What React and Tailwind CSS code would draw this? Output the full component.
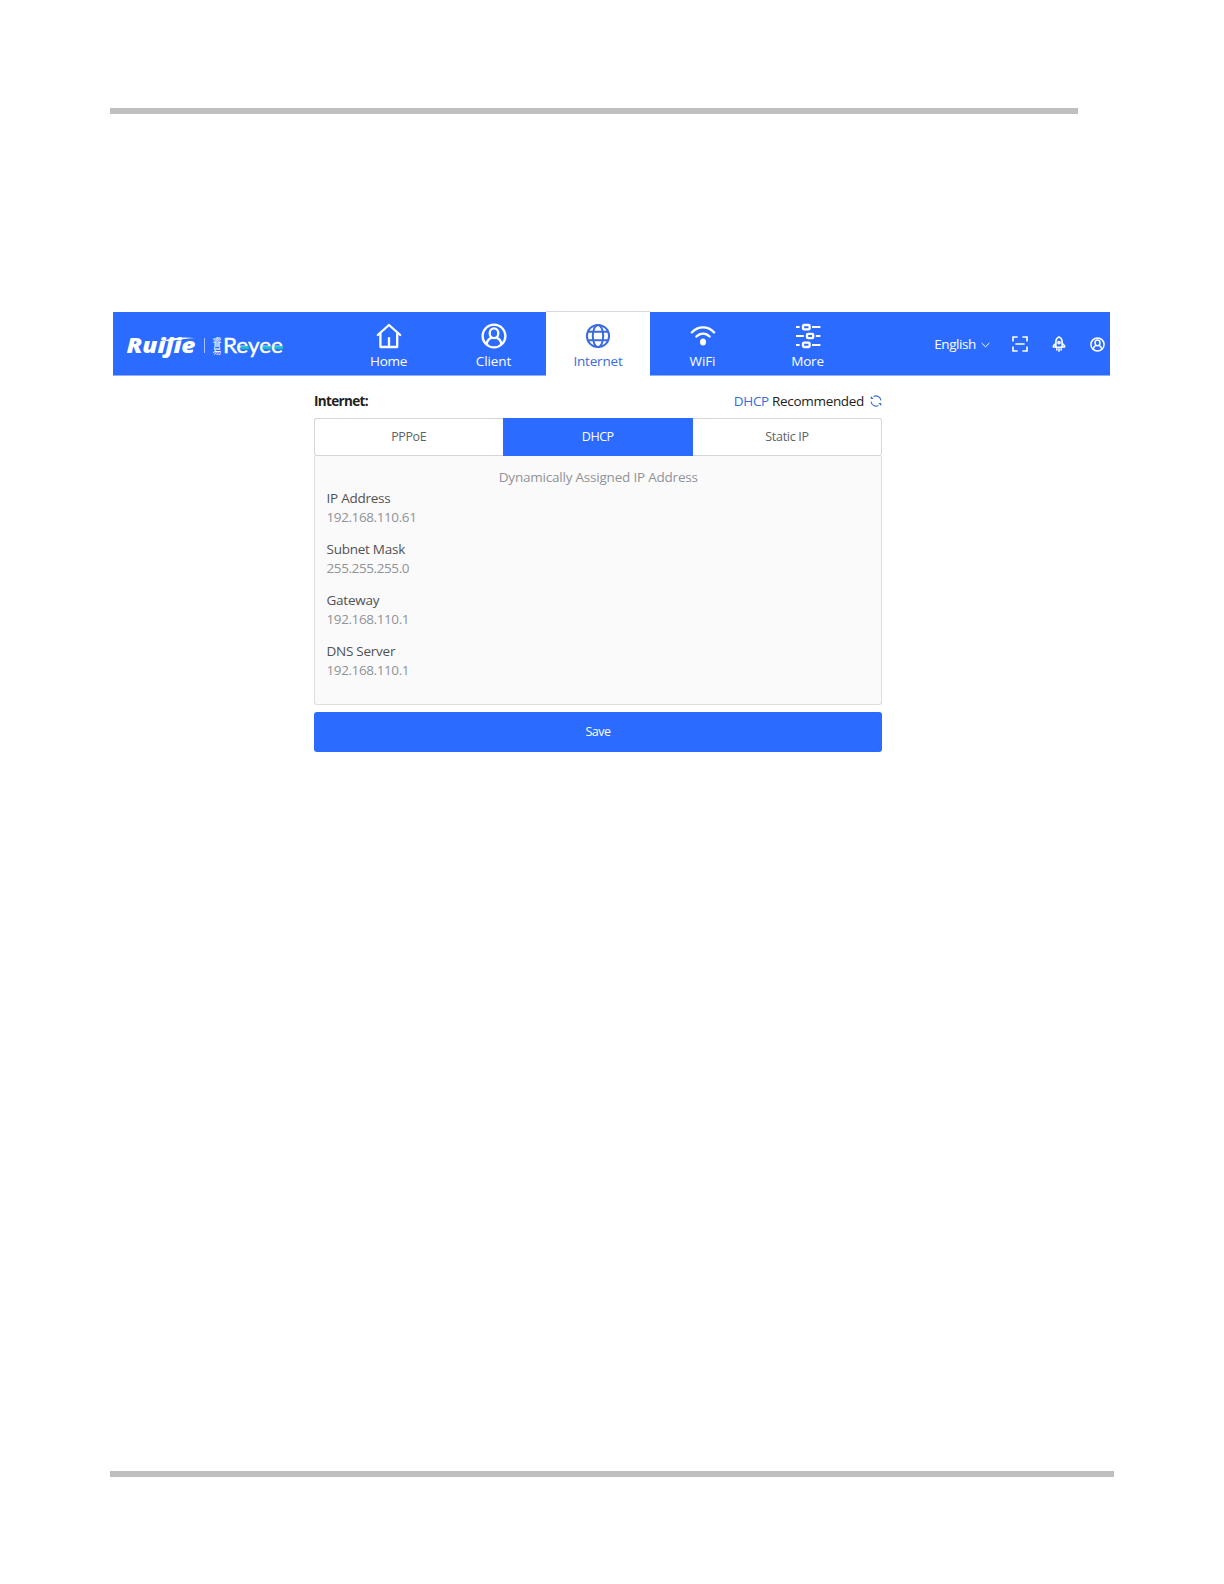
import React from "react";

function HomeIcon() {
  return (
    <svg width="26" height="26" viewBox="0 0 26 26" fill="none" stroke="currentColor" strokeWidth="2.3" strokeLinejoin="round" strokeLinecap="round">
      <path d="M1.8 12 L13 2 L24.2 12" />
      <path d="M4.4 10.2 V24 H21.2 V10.2" />
      <path d="M13 23.5 V14.2" strokeLinecap="butt" />
    </svg>
  );
}

function UserIcon({ size = 26, stroke = 2.3 }) {
  return (
    <svg width={size} height={size} viewBox="0 0 26 26" fill="none" stroke="currentColor" strokeWidth={stroke} strokeLinecap="round">
      <circle cx="13" cy="13" r="11.4" />
      <ellipse cx="13" cy="10.2" rx="4.3" ry="4.9" />
      <path d="M5.6 21 C6.2 17.6 8 15.6 10.4 14.6 M20.4 21 C19.8 17.6 18 15.6 15.6 14.6" />
    </svg>
  );
}

function GlobeIcon() {
  return (
    <svg width="26" height="26" viewBox="0 0 26 26" fill="none" stroke="currentColor" strokeWidth="2">
      <circle cx="13" cy="13" r="11.1" />
      <ellipse cx="13" cy="13" rx="5.2" ry="11.1" />
      <path d="M3 8.8 H23 M3 17.2 H23" />
    </svg>
  );
}

function WifiIcon() {
  return (
    <svg width="26" height="26" viewBox="0 0 26 26" fill="none" stroke="currentColor" strokeWidth="2.3" strokeLinecap="round">
      <path d="M1.8 9.4 C8 2.6 18 2.6 24.2 9.4" />
      <path d="M6.4 13.6 C10 9.6 16 9.6 19.6 13.6" />
      <ellipse cx="13" cy="19" rx="3" ry="3.6" fill="currentColor" stroke="none" />
    </svg>
  );
}

function MoreIcon() {
  return (
    <svg width="26" height="26" viewBox="0 0 26 26" fill="none" stroke="currentColor" strokeWidth="2.3">
      <rect x="8" y="2" width="6.6" height="4.4" rx="1" />
      <rect x="12" y="10.8" width="6.2" height="4.4" rx="1" />
      <rect x="8" y="19.6" width="6.6" height="4.4" rx="1" />
      <path d="M1 4.1 H4.6 M17 4.1 H25.4 M1 13 H8.8 M20.8 13 H25.4 M1 21.9 H4.6 M17 21.9 H25.4" strokeWidth="2" />
    </svg>
  );
}

function ScanIcon() {
  return (
    <svg width="16" height="16" viewBox="0 0 16 16" fill="none" stroke="currentColor" strokeWidth="1.6">
      <path d="M1 5.4 V1 H5.6 M10.4 1 H15 V5.4 M15 10.6 V15 H10.4 M5.6 15 H1 V10.6 M3.4 8 H12.6" />
    </svg>
  );
}

function RocketIcon() {
  return (
    <svg width="14" height="16" viewBox="0 0 14 16" fill="none" stroke="currentColor" strokeWidth="1.6" strokeLinejoin="round">
      <path d="M3.9 11.2 V5.4 C3.9 3.2 5.4 1.7 7 0.9 C8.6 1.7 10.1 3.2 10.1 5.4 V11.2 Z" />
      <path d="M3.9 7.2 L1.4 9.8 V11 H3.9 M10.1 7.2 L12.6 9.8 V11 H10.1" />
      <circle cx="7" cy="6.6" r="1.1" />
      <path d="M4.8 12.2 V14.4 M7 12.2 V15.8 M9.2 12.2 V14.4" />
    </svg>
  );
}

function RefreshIcon() {
  return (
    <svg width="12" height="12" viewBox="0 0 12 12" fill="none" stroke="currentColor" strokeWidth="1.1">
      <path d="M3.6 1.5 A5 5 0 0 1 10.9 5.4" />
      <path d="M8.4 10.5 A5 5 0 0 1 1.1 6.6" />
      <path d="M0.8 1 V4 H3.8 Z M11.2 11 V8 H8.2 Z" fill="currentColor" stroke="none" />
    </svg>
  );
}

function Logo() {
  return (
    <svg width="170" height="42" viewBox="0 -8 170 42" fill="#fff">
      <text x="0.5" y="18" textLength="69" lengthAdjust="spacingAndGlyphs" className="font-['Open_Sans',sans-serif] text-[20.5px] font-extrabold italic">
        Ruijie
      </text>
      <path d="M38 5.6 C46 2.6 58 2 70 3.2 C60 3.4 50 4.6 44 6.6 Z" />
      <rect x="78" y="3" width="1" height="15" fill="#a9c3ff" />
      <text x="91" y="2" className="font-['Noto_Sans_CJK_SC',sans-serif] text-[9px] [writing-mode:vertical-rl]">
        睿易
      </text>
      <text x="97" y="18" textLength="60" lengthAdjust="spacingAndGlyphs" stroke="#fff" strokeWidth="0.4" className="font-['Lato',sans-serif] text-[22px]">
        Reyee
      </text>
      <g fill="#16bccb">
        <rect x="114.5" y="11.2" width="8.4" height="3" />
        <rect x="136.5" y="11.2" width="8.4" height="3" />
        <rect x="148.5" y="11.2" width="8.4" height="3" />
      </g>
    </svg>
  );
}

const navItems = [
  { label: "Home", icon: <HomeIcon />, text: "tracking-[-0.35px]" },
  { label: "Client", icon: <UserIcon />, text: "tracking-[-0.1px]" },
  { label: "Internet", icon: <GlobeIcon />, text: "tracking-[-0.2px]", active: true },
  { label: "WiFi", icon: <WifiIcon />, text: "tracking-[-0.1px]" },
  { label: "More", icon: <MoreIcon />, text: "tracking-[-0.2px]" },
];

function Header() {
  return (
    <header className="ml-[113px] flex h-[64px] w-[997px] border-b border-[#8fb0ff] bg-[#2b6bff] text-white">
      <div className="w-[223px] pt-[15px] pl-[13px]">
        <Logo />
      </div>
      <nav className="flex">
        {navItems.map((item) => (
          <div
            key={item.label}
            className={
              item.active
                ? "-mb-px flex w-[104px] flex-col items-center border-t border-[#d5dae2] -mt-px bg-white pt-[11px] text-[#3a6be0]"
                : "flex w-[105px] flex-col items-center pt-[11px]"
            }
          >
            {item.icon}
            <span className={`mt-[2px] text-[13.5px] leading-[20px] ${item.text}`}>{item.label}</span>
          </div>
        ))}
      </nav>
      <div className="ml-auto flex h-[64px] items-center pr-[5px]">
        <span className="text-[13.5px] leading-[20px] tracking-[-0.4px]">English</span>
        <svg className="ml-[5px] mt-[2px]" width="9" height="6" viewBox="0 0 9 6" fill="none" stroke="currentColor">
          <path d="M0.6 1 L4.5 4.8 L8.4 1" />
        </svg>
        <span className="ml-[22px]"><ScanIcon /></span>
        <span className="ml-[24px]"><RocketIcon /></span>
        <span className="ml-[24px]"><UserIcon size={15} stroke={2.6} /></span>
      </div>
    </header>
  );
}

const details = [
  { label: "IP Address", value: "192.168.110.61" },
  { label: "Subnet Mask", value: "255.255.255.0" },
  { label: "Gateway", value: "192.168.110.1" },
  { label: "DNS Server", value: "192.168.110.1" },
];

export default function App() {
  return (
    <div className="flex h-[1584px] w-[1224px] flex-col bg-white font-['Open_Sans',sans-serif]">
      <div className="mt-[108px] ml-[110px] h-[6px] w-[968px] shrink-0 bg-[#bfbfbf]" />
      <div className="mt-[198px] shrink-0">
        <Header />
        <main className="ml-[314px] w-[568px]">
          <div className="flex h-[42px] items-center pt-[7px] text-[13.5px] leading-[20px] text-[#222]">
            <span className="font-bold tracking-[-0.65px]">Internet:</span>
            <span className="ml-auto tracking-[-0.32px]">
              <span className="text-[#3a6be0]">DHCP</span> Recommended
            </span>
            <span className="ml-[6px] text-[#3a6be0]"><RefreshIcon /></span>
          </div>
          <div className="flex h-[38px] text-center text-[12.5px] leading-[36px] text-[#606266]">
            <div className="w-[188.5px] rounded-l-[3px] border border-r-0 border-[#d4d6da] tracking-[-0.4px]">PPPoE</div>
            <div className="w-[190.5px] bg-[#2b6bff] pt-px tracking-[-0.45px] text-white">DHCP</div>
            <div className="w-[189px] rounded-r-[3px] border border-l-0 border-[#d4d6da] tracking-[-0.3px]">Static IP</div>
          </div>
          <section className="h-[249px] rounded-b-[3px] border border-t-0 border-[#dcdee2] bg-[#fafafa] pt-[11px] pl-[11.5px] text-[13.5px]">
            <p className="-ml-[11px] text-center leading-[20px] tracking-[-0.21px] text-[#909399]">
              Dynamically Assigned IP Address
            </p>
            <div className="pt-px">
              {details.map((d) => (
                <dl key={d.label} className="h-[51px]">
                  <dt className="leading-[20px] tracking-[-0.25px] text-[#505256]">{d.label}</dt>
                  <dd className="-mt-px leading-[20px] tracking-[-0.4px] text-[#909399]">{d.value}</dd>
                </dl>
              ))}
            </div>
          </section>
          <button className="mt-[7px] block h-[40px] w-full rounded-[3px] bg-[#2b6bff] text-[12.5px] leading-[40px] tracking-[-0.5px] text-white">
            Save
          </button>
        </main>
      </div>
      <div className="mt-[719px] ml-[110px] h-[6px] w-[1004px] shrink-0 bg-[#bfbfbf]" />
    </div>
  );
}
